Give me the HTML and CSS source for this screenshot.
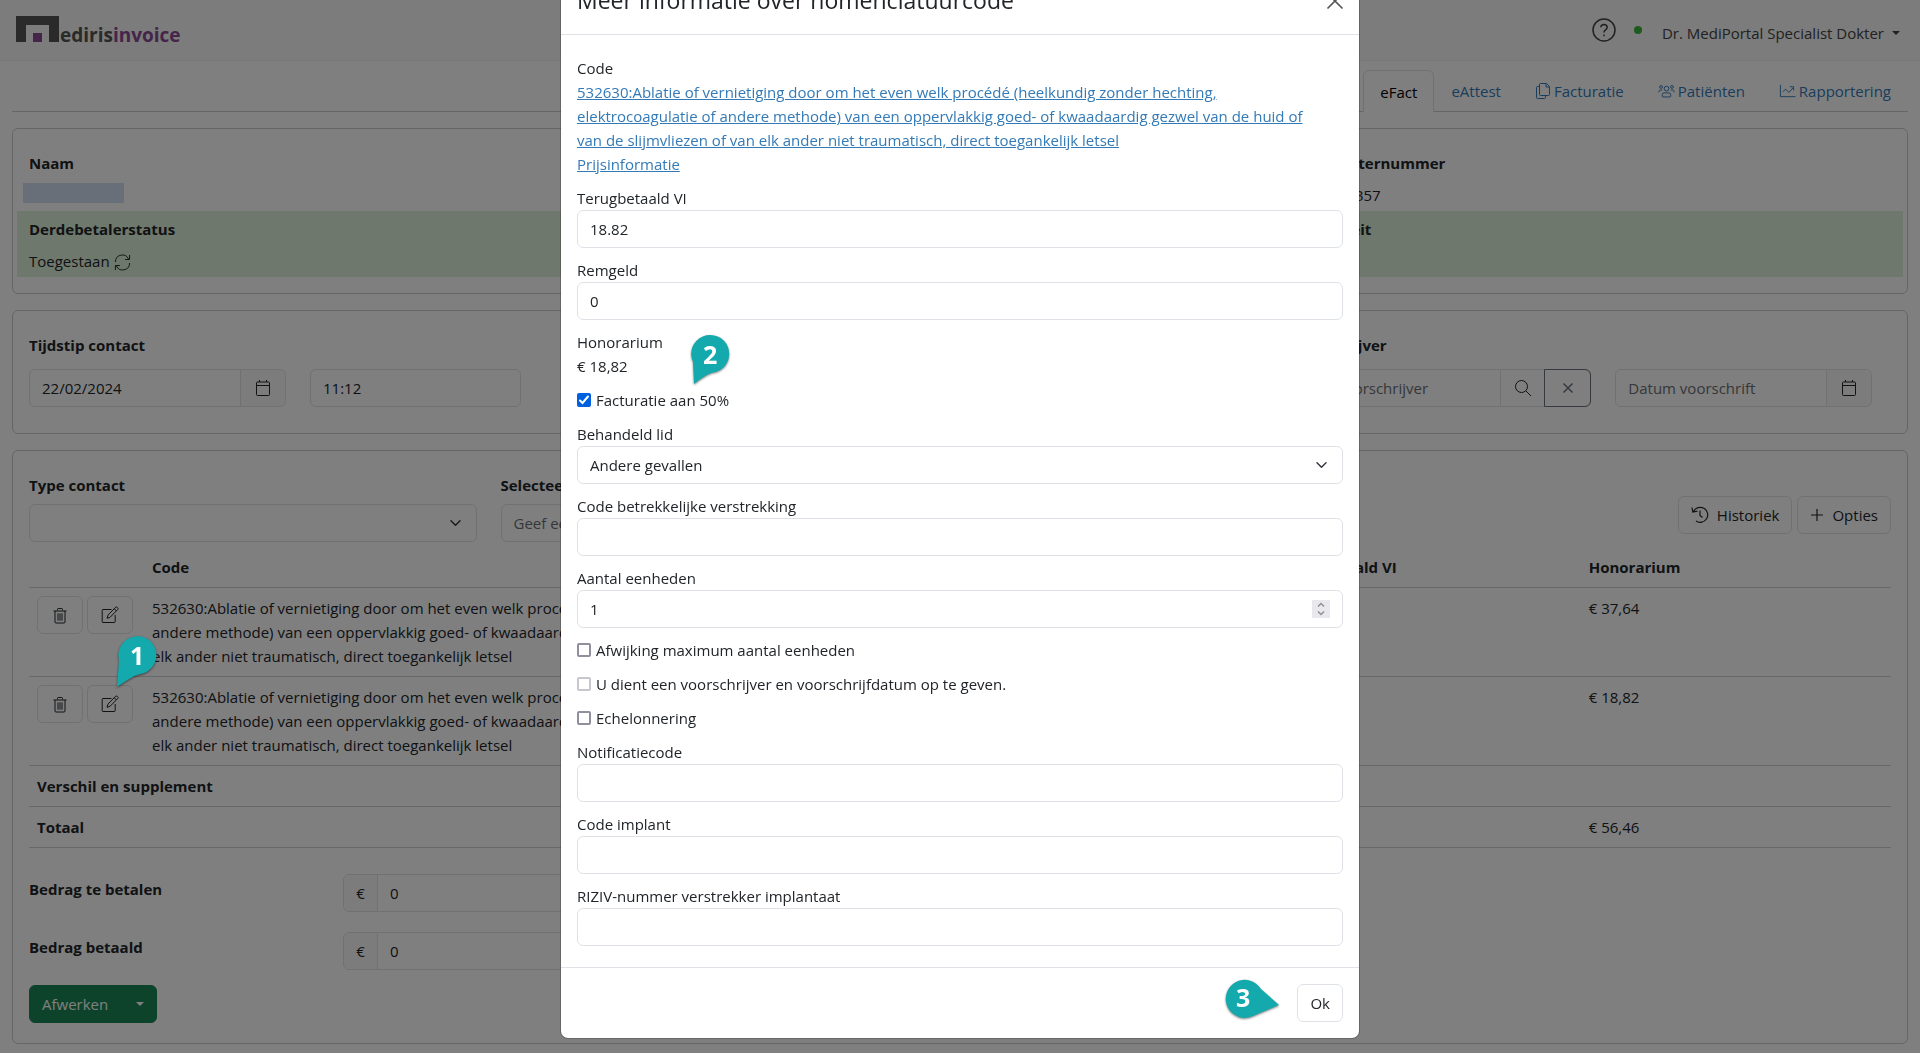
FILE: index.html
```html
<!DOCTYPE html>
<html lang="nl">
<head>
    <meta charset="UTF-8">
    <meta name="viewport" content="width=device-width, initial-scale=1.0">
    <title>Mediris Invoice - eFact</title>
    <link rel="stylesheet" href="styles.css">
</head>
<body>
    <!-- Iconen -->
    <svg class="sprite" aria-hidden="true">
        <symbol id="i-trash" viewBox="0 0 16 16"><path d="M1.5 3.5h13M5.5 3V1.8q0-.8.8-.8h3.4q.8 0 .8.8V3M3 3.5v11q0 1 1 1h8q1 0 1-1v-11M6 5.8v7.4M8 5.8v7.4M10 5.8v7.4"/></symbol>
        <symbol id="i-edit" viewBox="0 0 18 18"><path d="M10.5 3.5H2q-.8 0-.8.8v11.4q0 .8.8.8h11.4q.8 0 .8-.8V9M6 12.3l1-3.2 7.7-7.9q.7-.5 1.4.1l.8.8q.5.7-.1 1.3L9.1 11.3zM13.3 2.8l2.2 2.2"/></symbol>
        <symbol id="i-cal" viewBox="0 0 16 18"><path d="M2.5 3h11q1 0 1 1v11.500q0 1-1 1h-11q-1 0-1-1V4q0-1 1-1zM1.500 6.500h13M4.500 1v2M11.500 1v2"/></symbol>
        <symbol id="i-search" viewBox="0 0 18 18"><circle cx="7.500" cy="7.500" r="6"/><path d="M12 12l5 5"/></symbol>
        <symbol id="i-x" viewBox="0 0 12 12"><path d="M1.500 1.500l9 9M10.500 1.500l-9 9"/></symbol>
        <symbol id="i-plus" viewBox="0 0 14 14"><path d="M7 1v12M1 7h12"/></symbol>
        <symbol id="i-history" viewBox="0 0 18 18"><path d="M2.500 5.500A7.500 7.500 0 1 1 5 15M1 1.500l.8 4.500 4.700-.8M9 4.500V9.500l2.500 2"/></symbol>
        <symbol id="i-refresh" viewBox="0 0 18 18"><path d="M1.500 8.500A7.300 7.300 0 0 1 15.500 5.500M16.500 1v4.800h-4.800M16.500 9.500A7.300 7.300 0 0 1 2.500 12.500M1.500 17v-4.800h4.800"/></symbol>
        <symbol id="i-files" viewBox="0 0 16 18"><path d="M5.500 1.500h6l3 3v8q0 1-1 1h-8q-1 0-1-1v-10q0-1 1-1zM11 1.500V5h3.500M4.500 4.500h-2q-1 0-1 1v10q0 1 1 1h7q1 0 1-1v-2"/></symbol>
        <symbol id="i-people" viewBox="0 0 18 16"><circle cx="9" cy="5.500" r="2.500"/><circle cx="3.200" cy="3.700" r="1.500"/><circle cx="14.800" cy="3.700" r="1.500"/><path d="M4.500 13.500v-1.500q0-2 2-2h5q2 0 2 2v1.500q0 .8-.8.8H5.300q-.8 0-.8-.8zM1 9.500V8.500q0-1.500 1.500-1.500h2M17 9.500V8.500q0-1.500-1.500-1.500h-2"/></symbol>
        <symbol id="i-chart" viewBox="0 0 18 16"><path d="M1.500 1.500v12.500h16M4 9l3-3 3.500 3.500L15 4.500M11.500 3.500h4v4"/></symbol>
    </svg>

    <header class="topbar">
        <a class="logo" href="#" aria-label="Medirisinvoice">
            <svg class="logo__mark" width="43" height="26" viewBox="0 0 43 26"><path fill="#555" d="M0 0h43v26H33V9H10v17H0z"/><path fill="#8b4a94" d="M17 17h9v9h-9z"/></svg>
            <span>ediris</span><span class="logo__sub">invoice</span>
        </a>
        <div class="topbar__user">
            <svg class="help" width="24" height="24" viewBox="0 0 24 24"><circle cx="12" cy="12" r="11"/><path d="M8.800 9.300q.2-2.900 3.200-2.900 3.100.1 3.200 2.800 0 1.500-1.700 2.700-1.500 1.100-1.500 2.600M12 16.500v1.800"/></svg>
            <span class="status"></span>
            <button type="button" class="user">Dr. MediPortal Specialist Dokter<span class="caret"></span></button>
        </div>
    </header>

    <main class="page">
        <nav class="tabs">
            <a class="tab tab--active" href="#">eFact</a>
            <a class="tab" href="#">eAttest</a>
            <a class="tab" href="#"><svg class="icon" width="16" height="18"><use href="#i-files"/></svg>Facturatie</a>
            <a class="tab" href="#"><svg class="icon" width="17" height="16"><use href="#i-people"/></svg>Patiënten</a>
            <a class="tab" href="#"><svg class="icon" width="17" height="16"><use href="#i-chart"/></svg>Rapportering</a>
        </nav>

        <section class="card card--patient">
            <div class="row">
                <div class="cell"><strong>Naam</strong><span class="redacted"></span></div>
                <div class="cell"></div>
                <div class="cell"><strong>Rijksregisternummer</strong><span>80010112357</span></div>
            </div>
            <div class="row row--ok">
                <div class="cell"><strong>Derdebetalerstatus</strong><span>Toegestaan <svg class="icon" width="17" height="17"><use href="#i-refresh"/></svg></span></div>
                <div class="cell"></div>
                <div class="cell"><strong>Mutualiteit</strong></div>
            </div>
        </section>

        <section class="card card--contact">
            <div class="row">
                <div class="field">
                    <label for="datum">Tijdstip contact</label>
                    <div class="controls">
                        <div class="group group--date">
                            <input type="text" id="datum" value="22/02/2024">
                            <button type="button" aria-label="Kalender"><svg class="icon" width="16" height="18"><use href="#i-cal"/></svg></button>
                        </div>
                        <input type="text" class="control control--time" aria-label="Uur" value="11:12">
                    </div>
                </div>
                <div class="field"></div>
                <div class="field">
                    <label for="voorschrijver">Voorschrijver</label>
                    <div class="controls">
                        <div class="group group--search">
                            <input type="text" id="voorschrijver" placeholder="Zoek voorschrijver">
                            <button type="button" class="group__plain" aria-label="Zoeken"><svg class="icon" width="18" height="18"><use href="#i-search"/></svg></button>
                            <button type="button" class="group__clear" aria-label="Wissen"><svg class="icon" width="12" height="12"><use href="#i-x"/></svg></button>
                        </div>
                        <div class="group group--date">
                            <input type="text" aria-label="Datum voorschrift" placeholder="Datum voorschrift">
                            <button type="button" aria-label="Kalender"><svg class="icon" width="16" height="18"><use href="#i-cal"/></svg></button>
                        </div>
                    </div>
                </div>
            </div>
        </section>

        <section class="card card--codes">
            <div class="row row--filter">
                <div class="field field--quarter">
                    <label for="type">Type contact</label>
                    <select id="type" class="control"><option></option></select>
                </div>
                <div class="field field--quarter">
                    <label for="zoek">Selecteer code</label>
                    <input type="text" id="zoek" class="control" placeholder="Geef een code">
                </div>
                <div class="actions">
                    <button type="button" class="btn"><svg class="icon" width="18" height="18"><use href="#i-history"/></svg>Historiek</button>
                    <button type="button" class="btn"><svg class="icon" width="14" height="14"><use href="#i-plus"/></svg>Opties</button>
                </div>
            </div>

            <table class="codes">
                <colgroup><col class="codes__tools"><col class="codes__code"><col><col class="codes__amount"><col class="codes__amount"></colgroup>
                <thead>
                    <tr><th></th><th>Code</th><th></th><th>Terugbetaald VI</th><th>Honorarium</th></tr>
                </thead>
                <tbody>
                    <tr>
                        <td>
                            <div class="tools">
                                <button type="button" class="btn btn--icon" aria-label="Verwijderen"><svg class="icon" width="16" height="17"><use href="#i-trash"/></svg></button>
                                <button type="button" class="btn btn--icon" aria-label="Bewerken"><svg class="icon" width="18" height="18"><use href="#i-edit"/></svg></button>
                                <span class="marker marker--one"><svg width="42" height="54" viewBox="0 0 42 54"><path d="M3 25A19 19 0 1 1 24 39Q18 40 1 52z"/></svg><b>1</b></span>
                            </div>
                        </td>
                        <td>532630:Ablatie of vernietiging door om het even welk procédé (heelkundig zonder hechting, elektrocoagulatie of andere methode) van een oppervlakkig goed- of kwaadaardig gezwel van de huid of van de slijmvliezen of van elk ander niet traumatisch, direct toegankelijk letsel</td>
                        <td></td>
                        <td></td>
                        <td>€ 37,64</td>
                    </tr>
                    <tr>
                        <td>
                            <div class="tools">
                                <button type="button" class="btn btn--icon" aria-label="Verwijderen"><svg class="icon" width="16" height="17"><use href="#i-trash"/></svg></button>
                                <button type="button" class="btn btn--icon" aria-label="Bewerken"><svg class="icon" width="18" height="18"><use href="#i-edit"/></svg></button>
                            </div>
                        </td>
                        <td>532630:Ablatie of vernietiging door om het even welk procédé (heelkundig zonder hechting, elektrocoagulatie of andere methode) van een oppervlakkig goed- of kwaadaardig gezwel van de huid of van de slijmvliezen of van elk ander niet traumatisch, direct toegankelijk letsel</td>
                        <td></td>
                        <td></td>
                        <td>€ 18,82</td>
                    </tr>
                    <tr><th colspan="3">Verschil en supplement</th><td></td><td></td></tr>
                    <tr><th colspan="3">Totaal</th><td></td><td>€ 56,46</td></tr>
                </tbody>
            </table>

            <div class="row row--pay">
                <label for="tebetalen">Bedrag te betalen</label>
                <div class="group group--euro"><span>€</span><input type="text" id="tebetalen" value="0"></div>
            </div>
            <div class="row row--pay">
                <label for="betaald">Bedrag betaald</label>
                <div class="group group--euro"><span>€</span><input type="text" id="betaald" value="0"></div>
            </div>
            <button type="button" class="btn btn--finish">Afwerken<span class="caret"></span></button>
        </section>
    </main>

    <div class="backdrop">
        <div class="modal" role="dialog" aria-labelledby="modal-title">
            <div class="modal__header">
                <h4 id="modal-title">Meer informatie over nomenclatuurcode</h4>
                <button type="button" class="close" aria-label="Sluiten"><svg class="icon" width="20" height="20"><use href="#i-x"/></svg></button>
            </div>
            <form class="modal__body">
                <div class="form-group form-group--code">
                    <span>Code</span>
                    <a href="#">532630:Ablatie of vernietiging door om het even welk procédé (heelkundig zonder hechting, elektrocoagulatie of andere methode) van een oppervlakkig goed- of kwaadaardig gezwel van de huid of van de slijmvliezen of van elk ander niet traumatisch, direct toegankelijk letsel</a>
                    <br><a href="#">Prijsinformatie</a>
                </div>
                <div class="form-group">
                    <label for="terugbetaald">Terugbetaald VI</label>
                    <input type="text" id="terugbetaald" class="control" value="18.82">
                </div>
                <div class="form-group">
                    <label for="remgeld">Remgeld</label>
                    <input type="text" id="remgeld" class="control" value="0">
                </div>
                <div class="form-group form-group--fee">
                    <div>Honorarium</div>
                    <div>€ 18,82</div>
                    <span class="marker marker--two"><svg width="42" height="54" viewBox="0 0 42 54"><path d="M4 28A19 19 0 1 1 27 38Q20 38 5 50z"/></svg><b>2</b></span>
                </div>
                <label class="form-group check"><input type="checkbox" checked>Facturatie aan 50%</label>
                <div class="form-group">
                    <label for="lid">Behandeld lid</label>
                    <select id="lid" class="control"><option>Andere gevallen</option></select>
                </div>
                <div class="form-group">
                    <label for="betrekkelijk">Code betrekkelijke verstrekking</label>
                    <input type="text" id="betrekkelijk" class="control">
                </div>
                <div class="form-group">
                    <label for="aantal">Aantal eenheden</label>
                    <div class="control spin">
                        <input type="number" id="aantal" value="1">
                        <svg width="18" height="18" viewBox="0 0 18 18"><path d="M6 6.500l3-3 3 3M6 11.500l3 3 3-3"/></svg>
                    </div>
                </div>
                <label class="form-group check"><input type="checkbox">Afwijking maximum aantal eenheden</label>
                <label class="form-group check"><input type="checkbox" disabled>U dient een voorschrijver en voorschrijfdatum op te geven.</label>
                <label class="form-group check"><input type="checkbox">Echelonnering</label>
                <div class="form-group">
                    <label for="notificatie">Notificatiecode</label>
                    <input type="text" id="notificatie" class="control">
                </div>
                <div class="form-group">
                    <label for="implant">Code implant</label>
                    <input type="text" id="implant" class="control">
                </div>
                <div class="form-group">
                    <label for="riziv">RIZIV-nummer verstrekker implantaat</label>
                    <input type="text" id="riziv" class="control">
                </div>
            </form>
            <div class="modal__footer">
                <span class="marker marker--three"><svg width="56" height="42" viewBox="0 0 56 42"><path d="M29 39A19 19 0 1 1 37 12L55 28z"/></svg><b>3</b></span>
                <button type="button" class="btn">Ok</button>
            </div>
        </div>
    </div>
</body>
</html>
```
FILE: styles.css
```css
* {
    box-sizing: border-box;
}
body {
    margin: 0;
    background: #fff;
    color: #212529;
    font-family: 'Open Sans', 'Noto Sans', sans-serif;
    font-size: 15px;
    line-height: 24px;
}
button, input, select {
    font: inherit;
    color: inherit;
    margin: 0;
}
button {
    background: none;
    border: 0;
    cursor: pointer;
}
a {
    color: #337ab7;
}
.sprite {
    display: none;
}
.icon {
    fill: none;
    stroke: currentColor;
    stroke-width: 1;
    vertical-align: middle;
    flex: none;
}
.caret {
    border: 4px solid transparent;
    border-top-color: currentColor;
    border-bottom: 0;
}

/* Bovenbalk */
.topbar {
    display: flex;
    justify-content: space-between;
    align-items: center;
    padding: 8px 16px;
    height: 61px;
    background: #f8f8f8;
    border-bottom: 1px solid #f0f0f0;
}
.logo {
    display: flex;
    align-items: flex-end;
    font-size: 19px;
    font-weight: bold;
    line-height: 20px;
    color: #555;
    text-decoration: none;
}
.logo__mark {
    margin-right: 1px;
    margin-bottom: 3px;
}
.logo__sub {
    color: #8b4a94;
}
.topbar__user {
    display: flex;
    align-items: center;
}
.help {
    fill: none;
    stroke: #444;
    stroke-width: 1.5;
}
.status {
    width: 8px;
    height: 8px;
    margin: 0 20px 0 18px;
    border-radius: 50%;
    background: #3cb53c;
}
.user {
    display: flex;
    align-items: center;
    gap: 8px;
    padding: 6px 4px 0 0;
    color: #444;
}

/* Tabbladen */
.page {
    padding: 9px 12px;
}
.tabs {
    display: flex;
    justify-content: flex-end;
    border-bottom: 1px solid #ccc;
    margin-bottom: 16px;
}
.tab {
    display: flex;
    align-items: center;
    gap: 3px;
    padding: 8px 16px;
    border: 1px solid transparent;
    border-bottom: 0;
    text-decoration: none;
}
.tab--active {
    margin-bottom: -1px;
    border-color: #dee2e6;
    border-radius: 6px 6px 0 0;
    background: #fff;
    color: #000;
}

/* Kaarten */
.card {
    margin-bottom: 16px;
    border: 1px solid #ccc;
    border-radius: 6px;
}
.row {
    display: flex;
}
.card--patient {
    padding: 16px 4px;
}
.cell {
    display: flex;
    flex-direction: column;
    gap: 8px;
    width: calc(100% / 3);
    height: 66px;
    padding: 6px 12px 4px;
}
.row--ok {
    background: #dff0d8;
}
.redacted {
    width: 101px;
    height: 20px;
    margin-left: -6px;
    background: #d0dff0;
}
.card--contact {
    padding: 22px 4px 26px;
}
.field {
    display: flex;
    flex-direction: column;
    gap: 12px;
    width: calc(100% / 3);
    padding: 0 12px;
}
.field label, .row--pay label {
    font-weight: bold;
}
.controls {
    display: flex;
    gap: 24px;
}
.control {
    display: block;
    width: 100%;
    height: 38px;
    padding: 6px 12px;
    border: 1px solid #dee2e6;
    border-radius: 6px;
    background: #fff;
}
select.control {
    appearance: none;
    background: #fff url("data:image/svg+xml,%3Csvg xmlns='http://www.w3.org/2000/svg' viewBox='0 0 16 16'%3E%3Cpath fill='none' stroke='%23343a40' stroke-linecap='round' stroke-linejoin='round' stroke-width='2' d='m2 5 6 6 6-6'/%3E%3C/svg%3E") no-repeat right 14px center / 13px 12px;
}
.control--time {
    width: 211px;
}
::placeholder {
    color: #6c6f73;
    opacity: 1;
}
.group {
    display: flex;
    height: 38px;
    border: 1px solid #dee2e6;
    border-radius: 6px;
}
.group input {
    flex: 1;
    min-width: 0;
    padding: 6px 12px;
    border: 0;
    border-radius: 6px;
    background: none;
}
.group button, .group span {
    display: flex;
    align-items: center;
    justify-content: center;
    flex: none;
    padding: 0 14px;
    border-left: 1px solid #dee2e6;
    background: #f8f9fa;
    border-radius: 0 6px 6px 0;
}
.group--date {
    width: 257px;
}
.group--search {
    width: 305px;
}
.group .group__plain {
    width: 45px;
    background: none;
    border-radius: 0;
}
.group .group__clear {
    width: 47px;
    margin: -1px;
    border: 1px solid #6c757d;
    background: none;
    color: #6c757d;
}
.group .group__clear .icon {
    stroke-width: 1.5;
}

/* Knoppen */
.btn {
    display: flex;
    align-items: center;
    justify-content: center;
    gap: 8px;
    height: 38px;
    padding: 6px 12px;
    border: 1px solid #dee2e6;
    border-radius: 6px;
}
.btn--icon {
    width: 46px;
    padding: 6px;
}

/* Codes */
.card--codes {
    padding: 22px 4px 20px;
    margin-bottom: 0;
}
.row--filter .field {
    gap: 7px;
}
.row--filter .field--quarter {
    width: 25%;
}
.actions {
    display: flex;
    gap: 5px;
    margin: 23px 12px 0 auto;
}
.actions .icon {
    stroke-width: 1.2;
}
.codes {
    width: calc(100% - 24px);
    margin: 5px 12px 26px;
    border-collapse: collapse;
    table-layout: fixed;
}
.codes th, .codes td {
    padding: 8px;
    border-bottom: 1px solid #ccd0d4;
    text-align: left;
    vertical-align: top;
}
.codes__tools {
    width: 115px;
}
.codes__code {
    width: 43%;
}
.codes__amount {
    width: calc(100% / 6);
}
.tools {
    position: relative;
    display: flex;
    gap: 4px;
}
.row--pay {
    margin-bottom: 20px;
}
.row--pay label {
    width: calc(100% / 6);
    padding: 3px 12px;
}
.group--euro {
    width: 25%;
    margin-left: 12px;
}
.group.group--euro span {
    padding: 0 12px;
    border-left: 0;
    border-right: 1px solid #dee2e6;
    border-radius: 6px 0 0 6px;
}
.btn--finish {
    gap: 28px;
    margin: -5px 0 0 12px;
    background: #198754;
    border-color: #198754;
    color: #fff;
}

/* Modaal venster */
.backdrop {
    position: fixed;
    inset: 0;
    display: flex;
    justify-content: center;
    align-items: flex-end;
    padding-bottom: 14px;
    background: rgba(0, 0, 0, 0.5);
    overflow: hidden;
}
.modal {
    flex: none;
    width: 100%;
    max-width: 800px;
    border: 1px solid rgba(0, 0, 0, 0.2);
    border-radius: 8px;
    background: #fff;
    background-clip: padding-box;
}
.modal__header {
    display: flex;
    justify-content: space-between;
    align-items: center;
    padding: 16px 14px 16px 16px;
    border-bottom: 1px solid #dee2e6;
}
.modal__header h4 {
    margin: 0;
    font-size: 23px;
    font-weight: normal;
    line-height: 36px;
}
.close {
    padding: 0;
    line-height: 20px;
    color: #555;
}
.modal__body {
    padding: 21px 16px 11px;
}
.form-group {
    margin-bottom: 10px;
}
.form-group label {
    display: block;
}
.form-group--code {
    padding-right: 16px;
}
.form-group--code span {
    display: block;
}
.form-group--fee {
    position: relative;
}
.check {
    display: flex;
    align-items: center;
    gap: 5px;
}
.check input {
    appearance: none;
    width: 14px;
    height: 14px;
    border: 2px solid #8f8f9d;
    border-radius: 2px;
    background: #fff;
}
.check input:disabled {
    border-color: #c7c7ce;
}
.check input:checked {
    border-color: #0060df;
    background: #0060df url("data:image/svg+xml,%3Csvg xmlns='http://www.w3.org/2000/svg' viewBox='0 0 10 10'%3E%3Cpath fill='none' stroke='%23fff' stroke-width='2' stroke-linecap='round' d='m1 5.500 2.500 2.500L9 1.500'/%3E%3C/svg%3E") center / 10px 10px;
}
.spin {
    display: flex;
    align-items: center;
}
.spin input {
    flex: 1;
    padding: 0;
    border: 0;
    appearance: textfield;
}
.spin input::-webkit-inner-spin-button {
    display: none;
}
.spin svg {
    background: #e9e9ed;
    fill: none;
    stroke: #8f8f9d;
    stroke-width: 1.5;
}
.modal__footer {
    display: flex;
    justify-content: flex-end;
    position: relative;
    padding: 16px;
    border-top: 1px solid #dee2e6;
}

/* Genummerde stappen */
.marker {
    position: absolute;
    z-index: 5;
    color: #fff;
    filter: drop-shadow(0 1px 1px rgba(0, 0, 0, 0.5));
}
.marker svg {
    display: block;
    fill: #13a9ad;
}
.marker b {
    position: absolute;
    top: 8px;
    left: 14px;
    font-size: 25px;
}
.marker--one {
    top: 39px;
    left: 79px;
}
.marker--two {
    top: 4px;
    left: 112px;
}
.marker--three {
    top: 9px;
    right: 79px;
}
.marker--three b {
    left: 12px;
}
```
